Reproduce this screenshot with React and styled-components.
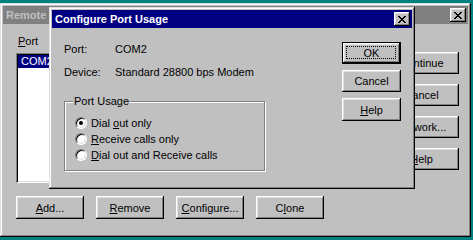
import React from "react";
import styled, { createGlobalStyle, css } from "styled-components";

const GlobalStyle = createGlobalStyle`
  html, body { margin: 0; padding: 0; background: #008080; }
  body {
    width: 473px; height: 240px; overflow: hidden;
    font-family: "Liberation Sans", Arial, sans-serif; font-size: 11px; color: #000;
  }
  * { box-sizing: border-box; }
`;

const Desktop = styled.div`
  position: relative;
  width: 473px;
  height: 240px;
  background: #008080;
  overflow: hidden;
`;

const Window = styled.div`
  position: absolute;
  left: ${(p) => p.$x}px;
  top: ${(p) => p.$y}px;
  width: ${(p) => p.$w}px;
  height: ${(p) => p.$h}px;
  padding: 3px;
  background: #c0c0c0;
  box-shadow: inset -1px -1px #000, inset 1px 1px #dfdfdf,
    inset -2px -2px #808080, inset 2px 2px #fff;
  display: flex;
  flex-direction: column;
`;

const TitleBar = styled.div`
  height: 18px;
  flex: none;
  display: flex;
  align-items: center;
  justify-content: space-between;
  padding: 0 2px 0 3px;
  background: ${(p) => (p.$active ? "#000080" : "#808080")};
  color: ${(p) => (p.$active ? "#fff" : "#c0c0c0")};
  font-weight: bold;
  font-size: 11px;
  white-space: nowrap;
  overflow: hidden;
`;

const TitleText = styled.span``;

const CloseBtn = styled.div`
  width: 16px;
  height: 14px;
  flex: none;
  background: #c0c0c0;
  display: flex;
  align-items: center;
  justify-content: center;
  padding-right: 1px;
  box-shadow: inset -1px -1px #000, inset 1px 1px #fff,
    inset -2px -2px #808080, inset 2px 2px #dfdfdf;
`;

const CloseIcon = () => (
  <svg width="8" height="7" viewBox="0 0 8 7" shapeRendering="crispEdges">
    <path
      fill="#000"
      d="M0 0h2v1h-2zM6 0h2v1h-2zM1 1h2v1h-2zM5 1h2v1h-2zM2 2h4v1h-4zM3 3h2v1h-2zM2 4h4v1h-4zM1 5h2v1h-2zM5 5h2v1h-2zM0 6h2v1h-2zM6 6h2v1h-2z"
    />
  </svg>
);

const Button = styled.button`
  position: relative;
  width: ${(p) => p.$w}px;
  height: ${(p) => p.$h || 22}px;
  flex: none;
  padding: 0;
  margin: 0;
  border: none;
  background: #c0c0c0;
  font-family: "Liberation Sans", Arial, sans-serif;
  font-size: 11px;
  color: #000;
  text-align: center;
  white-space: nowrap;
  box-shadow: inset -1px -1px #000, inset 1px 1px #fff,
    inset -2px -2px #808080, inset 2px 2px #dfdfdf;
  ${(p) =>
    p.$default &&
    css`
      border: 1px solid #000;
      &::after {
        content: "";
        position: absolute;
        inset: 3px 4px 4px 3px;
        border: 1px dotted #000;
      }
    `}
`;

/* ---------- outer window ---------- */

const OuterBody = styled.div`
  flex: 1;
  display: flex;
  flex-direction: column;
  padding: 11px 9px 0 13px;
`;

const OuterMain = styled.div`
  display: flex;
  justify-content: space-between;
  align-items: flex-start;
`;

const PortColumn = styled.div`
  display: flex;
  flex-direction: column;
`;

const FieldLabel = styled.div`
  line-height: 13px;
  margin-left: 2px;
  margin-bottom: 5px;
`;

const ListBox = styled.div`
  width: 180px;
  height: 130px;
  padding: 2px;
  background: #fff;
  box-shadow: inset 1px 1px #808080, inset -1px -1px #fff,
    inset 2px 2px #000, inset -2px -2px #dfdfdf;
`;

const ListItem = styled.div`
  height: 13px;
  line-height: 13px;
  padding-left: 3px;
  background: ${(p) => (p.$selected ? "#000080" : "transparent")};
  color: ${(p) => (p.$selected ? "#fff" : "#000")};
`;

const SideButtons = styled.div`
  display: flex;
  flex-direction: column;
  gap: 10px;
  margin-top: 17px;
`;

const BottomButtons = styled.div`
  display: flex;
  gap: 12px;
  margin-top: 13px;
`;

/* ---------- inner dialog ---------- */

const DialogBody = styled.div`
  flex: 1;
  display: flex;
  justify-content: space-between;
  padding: 14px 11px 0 12px;
`;

const LeftColumn = styled.div`
  display: flex;
  flex-direction: column;
  padding-top: 1px;
`;

const InfoGrid = styled.div`
  display: grid;
  grid-template-columns: 51px auto;
  row-gap: 10px;
  line-height: 13px;
`;

const Group = styled.fieldset`
  width: 201px;
  margin: 16px 0 0 0;
  padding: 7px 0 7px 10px;
  border: 1px solid #808080;
  box-shadow: inset 1px 1px #fff, 1px 1px #fff;
  display: flex;
  flex-direction: column;
`;

const Legend = styled.legend`
  padding: 0 1px;
  margin-left: -2px;
  line-height: 13px;
  background: #c0c0c0;
`;

const RadioRow = styled.label`
  display: flex;
  align-items: center;
  gap: 4px;
  height: 16px;
  line-height: 16px;
`;

const RadioDot = styled.span`
  position: relative;
  width: 12px;
  height: 12px;
  flex: none;
  border-radius: 50%;
  background: #fff;
  border: 1px solid;
  border-color: #808080 #fff #fff #808080;
  box-shadow: inset 1px 1px #000, inset -1px -1px #dfdfdf;
  ${(p) =>
    p.$checked &&
    css`
      &::after {
        content: "";
        position: absolute;
        left: 3px;
        top: 3px;
        width: 4px;
        height: 4px;
        border-radius: 50%;
        background: #000;
      }
    `}
`;

const DialogButtons = styled.div`
  display: flex;
  flex-direction: column;
  gap: 6px;
`;

export default function App() {
  return (
    <>
      <GlobalStyle />
      <Desktop>
        <Window $x={0} $y={3} $w={471} $h={234}>
          <TitleBar>
            <TitleText>Remote Access Setup</TitleText>
            <CloseBtn>
              <CloseIcon />
            </CloseBtn>
          </TitleBar>
          <OuterBody>
            <OuterMain>
              <PortColumn>
                <FieldLabel>
                  <u>P</u>ort
                </FieldLabel>
                <ListBox>
                  <ListItem $selected>COM2</ListItem>
                </ListBox>
              </PortColumn>
              <SideButtons>
                <Button $w={75}>Continue</Button>
                <Button $w={75}>Cancel</Button>
                <Button $w={75}>
                  <u>N</u>etwork...
                </Button>
                <Button $w={75}>
                  <u>H</u>elp
                </Button>
              </SideButtons>
            </OuterMain>
            <BottomButtons>
              <Button $w={68} $h={23}>
                <u>A</u>dd...
              </Button>
              <Button $w={68} $h={23}>
                <u>R</u>emove
              </Button>
              <Button $w={68} $h={23}>
                <u>C</u>onfigure...
              </Button>
              <Button $w={68} $h={23}>
                C<u>l</u>one
              </Button>
            </BottomButtons>
          </OuterBody>
        </Window>

        <Window $x={49} $y={7} $w={366} $h={182}>
          <TitleBar $active>
            <TitleText>Configure Port Usage</TitleText>
            <CloseBtn>
              <CloseIcon />
            </CloseBtn>
          </TitleBar>
          <DialogBody>
            <LeftColumn>
              <InfoGrid>
                <span>Port:</span>
                <span>COM2</span>
                <span>Device:</span>
                <span>Standard 28800 bps Modem</span>
              </InfoGrid>
              <Group>
                <Legend>Port Usage</Legend>
                <RadioRow>
                  <RadioDot $checked />
                  <span>
                    Dial <u>o</u>ut only
                  </span>
                </RadioRow>
                <RadioRow>
                  <RadioDot />
                  <span>
                    <u>R</u>eceive calls only
                  </span>
                </RadioRow>
                <RadioRow>
                  <RadioDot />
                  <span>
                    <u>D</u>ial out and Receive calls
                  </span>
                </RadioRow>
              </Group>
            </LeftColumn>
            <DialogButtons>
              <Button $w={59} $default>
                OK
              </Button>
              <Button $w={59}>Cancel</Button>
              <Button $w={59} $h={23}>
                <u>H</u>elp
              </Button>
            </DialogButtons>
          </DialogBody>
        </Window>
      </Desktop>
    </>
  );
}
